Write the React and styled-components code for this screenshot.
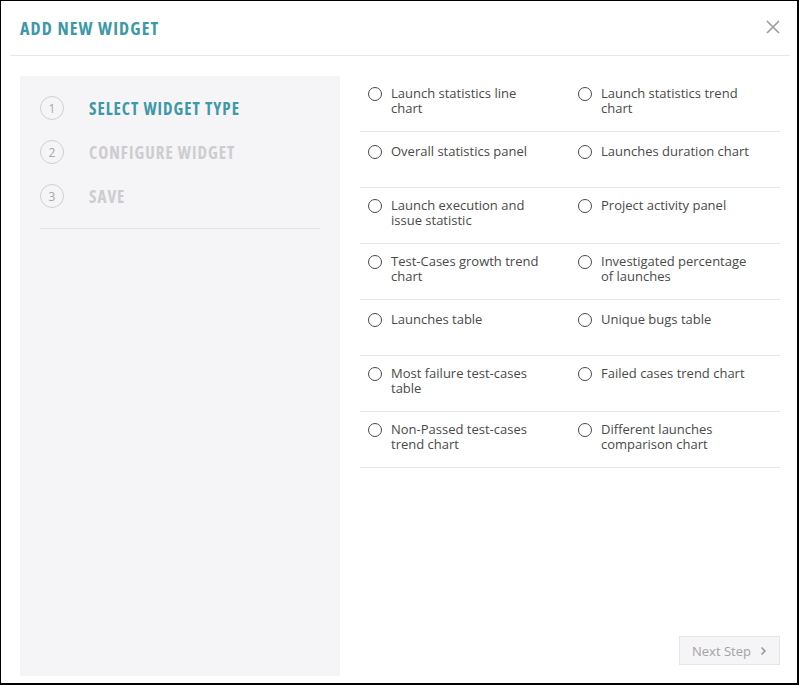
import React from "react";
import styled, { createGlobalStyle } from "styled-components";

const Global = createGlobalStyle`
  html, body { margin: 0; padding: 0; background: #fff; }
  * { box-sizing: border-box; }
  body { font-family: "Open Sans", "Liberation Sans", sans-serif; }
`;

const Frame = styled.div`
  width: 799px;
  height: 685px;
  border-style: solid;
  border-color: #000;
  border-width: 1px 2px 2px 1px;
  background: #fff;
  display: flex;
  flex-direction: column;
`;

const Header = styled.header`
  height: 55px;
  margin: 0 7px 0 9px;
  padding: 0 10px 0 10px;
  border-bottom: 1px solid #e6e6e6;
  display: flex;
  align-items: center;
  justify-content: space-between;
  flex-shrink: 0;
`;

const Title = styled.h1`
  margin: 0;
  font-family: "Open Sans", sans-serif;
  font-stretch: 75%;
  font-weight: 700;
  font-size: 18px;
  letter-spacing: 1.15px;
  color: #3d98a8;
  padding-bottom: 1px;
`;

const CloseButton = styled.button`
  border: 0;
  background: none;
  padding: 0;
  width: 16px;
  height: 16px;
  display: flex;
  align-items: center;
  justify-content: center;
  cursor: pointer;
  margin-right: -1px;
  margin-top: -3px;
`;

const Body = styled.div`
  flex: 1;
  display: flex;
  gap: 20px;
  padding: 20px 17px 7px 19px;
`;

const StepsPanel = styled.aside`
  width: 320px;
  background: #f5f4f6;
  padding: 20px 20px 0 20px;
`;

const StepList = styled.ol`
  list-style: none;
  margin: 0;
  padding: 0 0 20px 0;
  border-bottom: 1px solid #e3e2e4;
  display: flex;
  flex-direction: column;
  gap: 20px;
`;

const Step = styled.li`
  display: flex;
  align-items: center;
  height: 24px;
`;

const StepNum = styled.span`
  width: 24px;
  height: 24px;
  border-radius: 50%;
  border: 1px solid #cfcfd1;
  display: flex;
  align-items: center;
  justify-content: center;
  font-size: 12px;
  color: #a6a6a8;
  margin-right: 25px;
  flex-shrink: 0;
`;

const StepLabel = styled.span`
  font-family: "Open Sans", sans-serif;
  font-stretch: 75%;
  font-weight: 700;
  font-size: 17px;
  letter-spacing: 1px;
  color: ${(p) => (p.$active ? "#3d98a8" : "#cdcdcf")};
`;

const Main = styled.section`
  flex: 1;
  display: flex;
  flex-direction: column;
`;

const Grid = styled.div`
  display: grid;
  grid-template-columns: 1fr 1fr;
`;

const Option = styled.label`
  height: 56px;
  border-bottom: 1px solid #e6e6e6;
  display: flex;
  align-items: flex-start;
  padding: ${(p) => (p.$single ? "12px" : "10px")} 0 0 8px;
  cursor: pointer;
`;

const Radio = styled.span`
  width: 14px;
  height: 14px;
  border-radius: 50%;
  border: 1px solid #4a4a4a;
  margin-top: 1px;
  margin-right: 9px;
  flex-shrink: 0;
  background: #fff;
`;

const OptionText = styled.span`
  font-size: 13px;
  line-height: 15px;
  color: #4a494b;
  max-width: 152px;
`;

const Footer = styled.div`
  margin-top: auto;
  display: flex;
  justify-content: flex-end;
  padding-bottom: 11px;
`;

const NextButton = styled.button`
  width: 101px;
  height: 29px;
  border: 1px solid #e6e6e8;
  background: #f5f4f6;
  color: #a3a3a5;
  font-family: "Open Sans", sans-serif;
  font-size: 13px;
  display: flex;
  align-items: center;
  justify-content: center;
  gap: 9px;
  padding: 1px 0 0 0;
  cursor: default;
`;

const options = [
  { label: "Launch statistics line chart" },
  { label: "Launch statistics trend chart" },
  { label: "Overall statistics panel", single: true },
  { label: "Launches duration chart", single: true },
  { label: "Launch execution and issue statistic" },
  { label: "Project activity panel" },
  { label: "Test-Cases growth trend chart" },
  { label: "Investigated percentage of launches" },
  { label: "Launches table", single: true },
  { label: "Unique bugs table", single: true },
  { label: "Most failure test-cases table" },
  { label: "Failed cases trend chart" },
  { label: "Non-Passed test-cases trend chart" },
  { label: "Different launches comparison chart" },
];

const steps = ["SELECT WIDGET TYPE", "CONFIGURE WIDGET", "SAVE"];

export default function App() {
  return (
    <>
      <Global />
      <Frame>
        <Header>
          <Title>ADD NEW WIDGET</Title>
          <CloseButton aria-label="close">
            <svg width="14" height="14" viewBox="0 0 14 14">
              <path d="M1 1 L13 13 M13 1 L1 13" stroke="#9a9a9a" strokeWidth="1.6" fill="none" />
            </svg>
          </CloseButton>
        </Header>
        <Body>
          <StepsPanel>
            <StepList>
              {steps.map((s, i) => (
                <Step key={s}>
                  <StepNum>{i + 1}</StepNum>
                  <StepLabel $active={i === 0}>{s}</StepLabel>
                </Step>
              ))}
            </StepList>
          </StepsPanel>
          <Main>
            <Grid>
              {options.map((o) => (
                <Option key={o.label} $single={o.single}>
                  <Radio />
                  <OptionText>{o.label}</OptionText>
                </Option>
              ))}
            </Grid>
            <Footer>
              <NextButton>
                Next Step
                <svg width="7" height="10" viewBox="0 0 7 10">
                  <path d="M1.5 1.5 L5 5 L1.5 8.5" stroke="#9a9a9a" strokeWidth="1.6" fill="none" />
                </svg>
              </NextButton>
            </Footer>
          </Main>
        </Body>
      </Frame>
    </>
  );
}
